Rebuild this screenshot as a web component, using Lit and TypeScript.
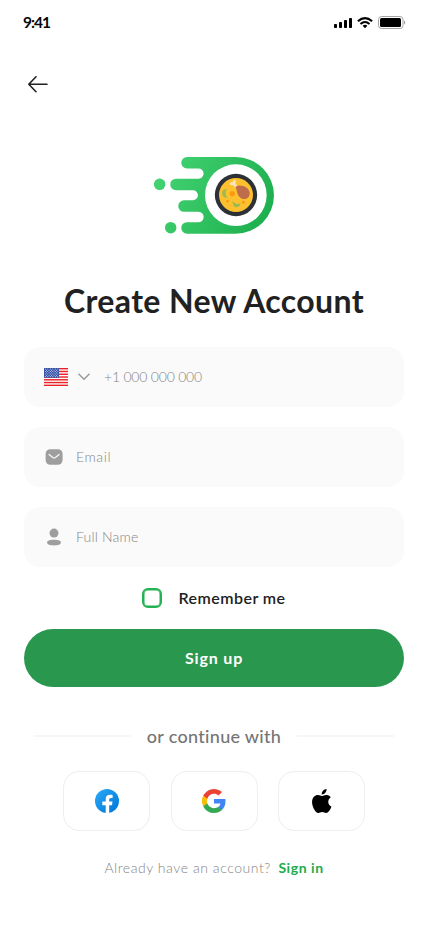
import { LitElement, html, css, svg } from "lit";
import { customElement, property } from "lit/decorators.js";

const stars = Array.from({ length: 7 }, (_, row) =>
  Array.from({ length: row % 2 ? 5 : 6 }, (_, col) =>
    svg`<circle cx=${1.3 + col * 2.5 + (row % 2 ? 1.25 : 0)} cy=${1.1 + row * 1.25} r=".5" fill="#dfe4f5"/>`
  )
);

const flag = html`<svg width="24" height="18" viewBox="0 0 24 18">
  <rect width="24" height="18" fill="#fff"/>
  ${[0, 1, 2, 3, 4, 5, 6].map((i) => svg`<rect y=${i * 2.77} width="24" height="1.42" fill="#ea2125"/>`)}
  <rect width="15" height="9.7" fill="#3350a6"/>
  ${stars}
</svg>`;

const chevron = html`<svg width="12" height="8" viewBox="0 0 12 8" fill="none">
  <path d="M1 1.2 6 6.2 11 1.2" stroke="#9e9e9e" stroke-width="1.6" stroke-linecap="round" stroke-linejoin="round"/>
</svg>`;

const mail = html`<svg width="20" height="20" viewBox="0 0 20 20" fill="none">
  <rect x="1.6" y="2.2" width="17" height="15.6" rx="4.8" fill="#9e9e9e"/>
  <path d="M5.1 7.5 8.8 10.4Q10.1 11.3 11.4 10.4L15.1 7.5" stroke="#fafafa" stroke-width="1.25" stroke-linecap="round"/>
</svg>`;

const person = html`<svg width="20" height="20" viewBox="0 0 20 20" fill="#9e9e9e">
  <circle cx="10" cy="6.1" r="4.5"/>
  <path d="M10 12.7c4.2 0 6.9.8 6.9 2.8s-2.7 2.9-6.9 2.9-6.9-.9-6.9-2.9 2.7-2.8 6.9-2.8Z"/>
</svg>`;

const logo = html`<svg width="120" height="77" viewBox="30 36 360 231">
  <defs>
    <linearGradient id="green" gradientUnits="userSpaceOnUse" x1="390" y1="230" x2="60" y2="70">
      <stop offset="0" stop-color="#1bac4b"/><stop offset="1" stop-color="#42d272"/>
    </linearGradient>
  </defs>
  <g fill="url(#green)">
    <path d="M129 36H275A115 115 0 0 1 275 266H129A17.25 17.25 0 0 1 129 231.5H163.5A15.5 15.5 0 0 0 163.5 200.5H120A17.25 17.25 0 0 1 120 166H146.5A15.25 15.25 0 0 0 146.5 135.5H96A17.25 17.25 0 0 1 96 101H163.5A15.25 15.25 0 0 0 163.5 70.5H129A17.25 17.25 0 0 1 129 36Z"/>
    <circle cx="47" cy="118" r="17.2"/>
    <circle cx="80" cy="248" r="17.2"/>
  </g>
  <circle cx="275.5" cy="150.5" r="92.5" fill="#fff"/>
  <circle cx="276" cy="150" r="63.5" fill="#2b3137"/>
  <circle cx="276" cy="150" r="51" fill="#fdc02f"/>
  <path d="M249 131c-6 8-6 20 2 27-22 2-22-27-2-27Z" fill="#9bbb50"/>
  <path d="M266 167c7 10 16 12 24 7-4 20-26 16-24-7Z" fill="#9bbb50"/>
  <circle cx="265" cy="146" r="8" fill="#fb9b0c"/>
  <circle cx="250" cy="169" r="4" fill="#fb9b0c"/>
  <circle cx="298" cy="172" r="4.5" fill="#fb9b0c"/>
  <path d="M267 114 281 130" stroke="#fbe5bf" stroke-width="8"/>
  <circle cx="263" cy="116" r="5" fill="#fbe5bf"/>
  <circle cx="271" cy="110" r="5" fill="#fbe5bf"/>
  <path d="M274 126c7-7 23-6 34 2 10 8 12 20 5 29-7 9-23 6-29-4-6-9-5-20-10-27Z" fill="#bd6d4c"/>
</svg>`;

const facebook = html`<svg width="24" height="24" viewBox="0 0 24 24">
  <defs><linearGradient id="blue" x1=".1" y1=".1" x2=".9" y2=".9">
    <stop offset="0" stop-color="#2aa4f4"/><stop offset="1" stop-color="#007ad9"/>
  </linearGradient></defs>
  <circle cx="12" cy="12" r="12" fill="url(#blue)"/>
  <path d="M10.7 24v-7.7H7.3v-3.7h3.4V10c0-3 1.7-4.3 4.3-4.3.9 0 1.8.1 2.6.2v3h-1.5c-1.5 0-1.9.8-1.9 1.8v1.9h3.3l-.5 3.7h-2.8V24Z" fill="#fff"/>
</svg>`;

const google = html`<svg width="24" height="24" viewBox="0 0 24 24">
  <path fill="#4285f4" d="M23.5 12.27c0-.8-.07-1.57-.2-2.27H12v4.5h6.47a5.53 5.53 0 0 1-2.4 3.6v3h3.87c2.26-2.09 3.56-5.17 3.56-8.83Z"/>
  <path fill="#34a853" d="M12 24c3.24 0 5.96-1.07 7.94-2.9l-3.87-3c-1.08.72-2.45 1.15-4.07 1.15-3.13 0-5.78-2.11-6.73-4.96H1.28v3.09A12 12 0 0 0 12 24Z"/>
  <path fill="#fbbc04" d="M5.27 14.29a7.2 7.2 0 0 1 0-4.58V6.62H1.28a12 12 0 0 0 0 10.76l3.99-3.09Z"/>
  <path fill="#ea4335" d="M12 4.75c1.77 0 3.35.61 4.6 1.8l3.43-3.43A11.98 11.98 0 0 0 1.28 6.62l3.99 3.09C6.22 6.86 8.87 4.75 12 4.75Z"/>
</svg>`;

const apple = html`<svg width="20" height="24" viewBox="-.2 0 20 24">
  <path d="M18.65 8.18c-.14.11-2.59 1.49-2.59 4.57 0 3.56 3.12 4.82 3.22 4.85-.02.08-.5 1.72-1.65 3.4C16.6 22.47 15.54 23.94 13.92 23.94s-2.04-.94-3.91-.94c-1.82 0-2.47.97-3.95.97s-2.51-1.36-3.7-3.03C.98 18.98-.14 15.94-.14 13.05c0-4.63 3.01-7.09 5.97-7.09 1.57 0 2.89 1.03 3.87 1.03.94 0 2.41-1.1 4.2-1.1.68 0 3.12.06 4.75 2.29ZM13.08 3.85c.74-.88 1.27-2.1 1.27-3.32 0-.17-.01-.34-.04-.48-1.21.05-2.65.8-3.51 1.81-.68.77-1.32 2-1.32 3.23 0 .19.03.37.05.43.08.01.2.03.33.03 1.08 0 2.45-.73 3.22-1.7Z"/>
</svg>`;

@customElement("status-bar")
class StatusBar extends LitElement {
  static styles = css`
    :host { display: flex; height: 45px; box-sizing: border-box; padding: 0 22px 0 23px; align-items: center; justify-content: space-between; }
    .time { font-size: 15.5px; line-height: 20px; margin-top: -1px; font-weight: 700; letter-spacing: -1px; color: #090909; }
    .icons { display: flex; align-items: center; gap: 5px; }
    svg { display: block; }
  `;
  render() {
    return html`<span class="time">9:41</span>
      <div class="icons">
        <svg width="18" height="12" viewBox="0 0 18 12">
          <rect y="7" width="3" height="4" rx=".8"/><rect x="5" y="5" width="3" height="6" rx=".8"/>
          <rect x="10" y="3" width="3" height="8" rx=".8"/><rect x="15" y="1" width="3" height="10" rx=".8"/>
        </svg>
        <svg width="16" height="12" viewBox="0 0 16 12" fill="none" stroke="#000" stroke-width="2.1">
          <path d="M.9 4.3Q8-1.9 15.1 4.3"/><path d="M3.5 7Q8 3 12.5 7"/>
          <path d="M5.6 8.8Q8 6.8 10.4 8.8L8 11.2Z" fill="#000" stroke="none"/>
        </svg>
        <svg width="28" height="13" viewBox="0 0 28 13">
          <rect x=".5" y=".5" width="24.5" height="12" rx="3" fill="#fff" stroke="#a4a4a4"/>
          <rect x="2" y="2" width="21" height="9" rx="1.5"/>
          <path d="M26 4.5c1.7.8 1.7 3.2 0 4Z" fill="#a4a4a4"/>
        </svg>
      </div>`;
  }
}

@customElement("form-field")
class FormField extends LitElement {
  @property() hint = "";
  static styles = css`
    :host { display: flex; align-items: center; height: 60px; box-sizing: border-box; padding: 0 20px; border-radius: 16px; background: #fafafa; }
    .hint { font-size: 14px; line-height: 20px; color: #858585; font-weight: 300; letter-spacing: var(--tracking, 0.2px); }
  `;
  render() {
    return html`<slot></slot><span class="hint">${this.hint}</span>`;
  }
}

@customElement("app-root")
class AppRoot extends LitElement {
  static styles = css`
    :host { display: flex; flex-direction: column; width: 428px; height: 926px; background: #fff; color: #212121; font-family: Lato, "Open Sans", sans-serif; overflow: hidden; }
    svg { display: block; flex: none; }
    .back { padding: 30px 28px 0; height: 82px; }
    .logo { align-self: center; }
    h1 { margin: 47px 0 0; height: 40px; line-height: 40px; font-size: 32px; font-weight: 700; letter-spacing: .37px; text-align: center; white-space: nowrap; }
    .fields { display: flex; flex-direction: column; gap: 20px; margin: 26px 24px 0; }
    .country { display: flex; align-items: center; gap: 10px; margin-right: 14px; }
    .icon { margin-right: 12px; }
    .phone { --tracking: -0.2px; }
    .email { --tracking: 0.6px; }
    .remember { display: flex; align-items: center; justify-content: center; gap: 16px; height: 20px; margin-top: 21px; font-size: 16px; line-height: 20px; font-weight: 600; letter-spacing: .46px; }
    .label { margin-top: -1px; }
    .box { width: 20px; height: 20px; box-sizing: border-box; border: 2.5px solid #25b252; border-width: 2.5px; border-radius: 6px; box-shadow: inset 0 0 0 .5px #25b252; }
    .submit { margin: 21px 24px 0; height: 58px; border: 0; border-radius: 29px; background: #2a974f; color: #fff; font: 700 16px/58px Lato, sans-serif; letter-spacing: .85px; text-align: center; padding: 0; }
    .divider { display: flex; align-items: center; margin: 34px 34px 0; height: 30px; gap: 16px; font-size: 18px; color: #757575; font-weight: 500; letter-spacing: .3px; }
    .divider::before, .divider::after { content: ""; flex: 1; height: 2px; background: #f6f6f6; }
    .social { display: flex; justify-content: center; gap: 20.5px; margin-top: 20px; }
    .card { display: flex; align-items: center; justify-content: center; width: 87px; height: 60px; box-sizing: border-box; border: 1px solid #eee; border-radius: 16px; }
    .footer { display: flex; justify-content: center; gap: 7.5px; margin-top: 27px; font-size: 14px; line-height: 20px; color: #858585; font-weight: 300; letter-spacing: .55px; white-space: nowrap; }
    .link { color: #1bac4b; font-weight: 700; }
  `;
  render() {
    return html`
      <status-bar></status-bar>
      <div class="back">
        <svg width="20" height="18" viewBox="0 0 20 18" fill="none" stroke="#212121" stroke-width="1.6" stroke-linecap="round" stroke-linejoin="round">
          <path d="M19 9.3H1M8 1.8.8 9.3 8 16.7"/>
        </svg>
      </div>
      <div class="logo">${logo}</div>
      <h1>Create New Account</h1>
      <div class="fields">
        <form-field class="phone" hint="+1 000 000 000"><div class="country">${flag}${chevron}</div></form-field>
        <form-field class="email" hint="Email"><div class="icon">${mail}</div></form-field>
        <form-field class="name" hint="Full Name"><div class="icon">${person}</div></form-field>
      </div>
      <div class="remember"><span class="box"></span><span class="label">Remember me</span></div>
      <button class="submit">Sign up</button>
      <div class="divider"><span>or continue with</span></div>
      <div class="social">
        <div class="card">${facebook}</div><div class="card">${google}</div><div class="card">${apple}</div>
      </div>
      <div class="footer"><span>Already have an account?</span><span class="link">Sign in</span></div>
    `;
  }
}
